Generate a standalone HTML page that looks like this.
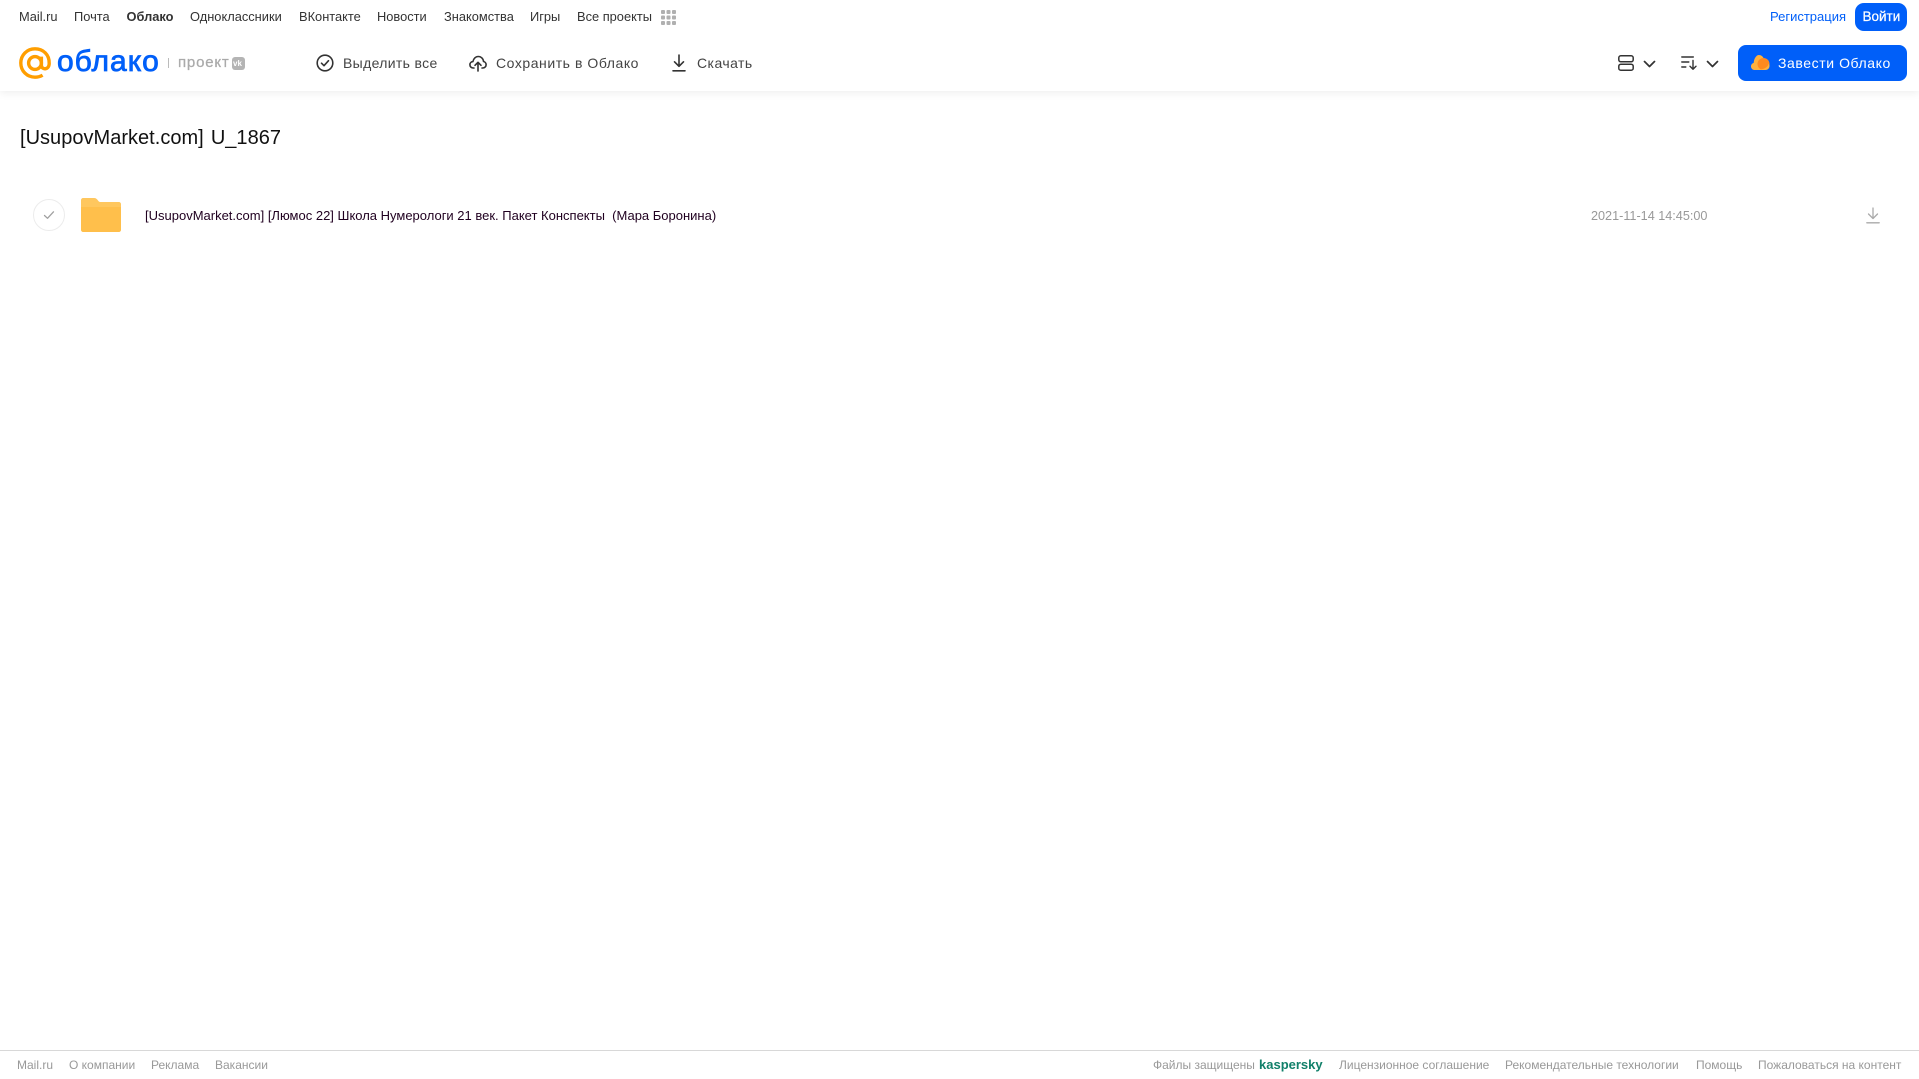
<!DOCTYPE html>
<html lang="ru"><head><meta charset="utf-8"><title>Облако</title>
<style>
html,body{margin:0;padding:0;background:#fff;width:1919px;height:1079px;overflow:hidden}
body{font-family:"Liberation Sans",sans-serif;position:relative}
.t{position:absolute;white-space:nowrap;line-height:16px;height:16px}
.n{top:9px;font-size:12.850px;color:#333}
.b{top:55px;font-size:14px;color:#444}
.f{top:1057px;font-size:12px;color:#999}
svg{position:absolute;overflow:visible}
</style></head><body>
<div style="position:absolute;left:0;top:0;width:1919px;height:91px;background:#fff;box-shadow:0 2px 8px rgba(0,0,0,.07)"></div>

<span class="t n" style="left:19px">Mail.ru</span>
<span class="t n" style="left:74px">Почта</span>
<span class="t n" style="left:126.500px;font-weight:bold">Облако</span>
<span class="t n" style="left:190px">Одноклассники</span>
<span class="t n" style="left:299px">ВКонтакте</span>
<span class="t n" style="left:377px">Новости</span>
<span class="t n" style="left:444px">Знакомства</span>
<span class="t n" style="left:530px">Игры</span>
<span class="t n" style="left:577px">Все проекты</span>
<svg style="left:661px;top:10px" width="15" height="15" fill="#b0b0b0"><rect x="0" y="0" width="4" height="4" rx="1"/><rect x="5.500" y="0" width="4" height="4" rx="1"/><rect x="11" y="0" width="4" height="4" rx="1"/><rect x="0" y="5.500" width="4" height="4" rx="1"/><rect x="5.500" y="5.500" width="4" height="4" rx="1"/><rect x="11" y="5.500" width="4" height="4" rx="1"/><rect x="0" y="11" width="4" height="4" rx="1"/><rect x="5.500" y="11" width="4" height="4" rx="1"/><rect x="11" y="11" width="4" height="4" rx="1"/></svg>

<span class="t n" style="left:1770px;font-size:13px;color:#005ff9">Регистрация</span>
<div style="position:absolute;left:1855px;top:3px;width:52px;height:28px;border-radius:9px;background:#005ff9"></div>
<span class="t n" style="left:1862.500px;font-size:13.500px;color:#fff;-webkit-text-stroke:.25px #fff">Войти</span>

<svg style="left:19px;top:47px" width="32" height="32" viewBox="0 0 32 32" fill="none" stroke="#ff9e00" stroke-width="3.400"><circle cx="16" cy="16" r="6.400"/><path d="M22.400 9.600v8.600c0 5 7.600 5 7.800-1.600C30.600 7.500 24 1.800 16 1.800 8 1.800 1.800 8 1.800 16S8 30.200 16 30.200c3 0 5.400-.7 7.600-2"/></svg>
<span class="t" style="left:57px;top:44px;height:36px;line-height:36px;font-size:30px;color:#005ff9;letter-spacing:1px;-webkit-text-stroke:.8px #005ff9">облако</span>
<div style="position:absolute;left:168px;top:58px;width:1px;height:10px;background:#bbb"></div>
<span class="t" style="left:178px;top:55px;font-size:15px;color:#aaa;letter-spacing:.8px;-webkit-text-stroke:.25px #aaa">проект</span>
<div style="position:absolute;left:232px;top:57px;width:13px;height:13px;border-radius:3px;background:#b4b4b4"></div>
<span class="t" style="left:233px;top:59px;height:9px;line-height:9px;font-size:8px;font-weight:bold;color:#fff">vk</span>

<svg style="left:316px;top:54px" width="18" height="18" viewBox="0 0 18 18" fill="none" stroke="#333" stroke-width="1.600"><circle cx="9" cy="9" r="7.800"/><path d="M5.500 9.200l2.500 2.500 4.500-5" stroke-linecap="round" stroke-linejoin="round"/></svg>
<span class="t b" style="left:343px;letter-spacing:.34px">Выделить все</span>

<svg style="left:469px;top:54px" width="18" height="18" viewBox="0 0 18 18" fill="none" stroke="#333" stroke-width="1.600" stroke-linecap="round" stroke-linejoin="round"><path d="M5 14H4.200C2.300 14 .9 12.600.9 10.800c0-1.700 1.300-3.100 3-3.200C4.500 4.700 6.600 2.500 9.300 2.500c2.800 0 5 2.200 5.200 5 1.500.3 2.600 1.600 2.600 3.200 0 1.900-1.500 3.300-3.300 3.300H13"/><path d="M9 17V8.500M6 11.300l3-3 3 3"/></svg>
<span class="t b" style="left:496px;letter-spacing:.55px">Сохранить в Облако</span>

<svg style="left:671px;top:54px" width="16" height="18" viewBox="0 0 16 18" fill="none" stroke="#333" stroke-width="1.600" stroke-linecap="round" stroke-linejoin="round"><path d="M8 1v11M3.500 7.800L8 12.300l4.500-4.500M2 16.800h12"/></svg>
<span class="t b" style="left:697px;letter-spacing:.45px">Скачать</span>

<svg style="left:1618px;top:55px" width="16" height="16" viewBox="0 0 16 16" fill="none" stroke="#333" stroke-width="1.500"><rect x=".8" y=".8" width="14.400" height="6" rx="2"/><rect x=".8" y="9.200" width="14.400" height="6" rx="2"/></svg>
<svg style="left:1643px;top:60px" width="13" height="8" viewBox="0 0 13 8" fill="none" stroke="#333" stroke-width="1.700" stroke-linecap="round" stroke-linejoin="round"><path d="M1.500 1.500l5 5 5-5"/></svg>
<svg style="left:1681px;top:56px" width="16" height="14" viewBox="0 0 16 14" fill="none" stroke="#333" stroke-width="1.400" stroke-linecap="round" stroke-linejoin="round"><path d="M.8 1h11.500M.8 6h7M.8 11h4M12 4.500v8.500M9 10.200l3 3 3-3"/></svg>
<svg style="left:1706px;top:60px" width="13" height="8" viewBox="0 0 13 8" fill="none" stroke="#333" stroke-width="1.700" stroke-linecap="round" stroke-linejoin="round"><path d="M1.500 1.500l5 5 5-5"/></svg>

<div style="position:absolute;left:1738px;top:45px;width:169px;height:36px;border-radius:8px;background:#005ff9"></div>
<svg style="left:1751px;top:54px" width="19" height="17" viewBox="0 0 19 17"><path d="M3.500 16C1.500 16 0 14.400 0 12.400c0-1.700 1.100-3.100 2.700-3.500C2.900 5 5.100 1 8 1c2.200 0 4 1.500 4.700 3.500L14 16z" fill="#ffb13d"/><circle cx="12.500" cy="10" r="6" fill="#ff8a1f"/><path d="M3.500 16h11c2 0 4-1.600 4-4 0-1-.3-1.800-.9-2.500C17 13.500 13 16 3.500 16z" fill="#ffb13d"/></svg>
<span class="t b" style="left:1778px;color:#fff;letter-spacing:.58px">Завести Облако</span>

<span class="t" style="left:20px;top:126px;height:24px;line-height:24px;font-size:20px;color:#111;letter-spacing:.02px;word-spacing:1.500px">[UsupovMarket.com] U_1867</span>

<div style="position:absolute;left:33px;top:199px;width:30px;height:30px;border:1px solid #ececec;border-radius:50%"></div>
<svg style="left:43px;top:210px" width="12" height="10" viewBox="0 0 12 10" fill="none" stroke="#a0a0a0" stroke-width="1.300" stroke-linecap="round" stroke-linejoin="round"><path d="M1.500 5.500l3 2.800 6-6.500"/></svg>
<svg style="left:81px;top:198px" width="40" height="34" viewBox="0 0 40 34"><path d="M2 0h11c2 0 3 1 4 2.500S19 4 20 4h18c1 0 2 1 2 2v4H0V2C0 1 1 0 2 0z" fill="#ffc75e"/><path d="M0 9h40V32c0 1-1 2-2 2H2c-1 0-2-1-2-2z" fill="#ffbf4b"/></svg>

<span class="t" style="left:145px;top:208px;font-size:13px;color:#200020;white-space:pre">[UsupovMarket.com] [Люмос 22] Школа Нумерологи 21 век. Пакет Конспекты  (Мара Боронина)</span>
<span class="t" style="left:1591px;top:208px;font-size:12.650px;color:#999">2021-11-14 14:45:00</span>
<svg style="left:1866px;top:207px" width="14" height="17" viewBox="0 0 14 17" fill="none" stroke="#aaa" stroke-width="1.300" stroke-linecap="round" stroke-linejoin="round"><path d="M7 1v10.500M2.500 7L7 11.500 11.500 7M.8 15.800h12.400"/></svg>

<div style="position:absolute;left:0;top:1050px;width:1919px;height:1px;background:#d8d8d8"></div>
<span class="t f" style="left:17px">Mail.ru</span>
<span class="t f" style="left:69px">О компании</span>
<span class="t f" style="left:151px">Реклама</span>
<span class="t f" style="left:215px">Вакансии</span>
<span class="t f" style="left:1153px">Файлы защищены</span>
<span class="t f" style="left:1259px;font-size:13px;font-weight:bold;color:#11806a">kaspersky</span>
<span class="t f" style="left:1339px">Лицензионное соглашение</span>
<span class="t f" style="left:1505px">Рекомендательные технологии</span>
<span class="t f" style="left:1696px">Помощь</span>
<span class="t f" style="left:1758px">Пожаловаться на контент</span>
</body></html>
